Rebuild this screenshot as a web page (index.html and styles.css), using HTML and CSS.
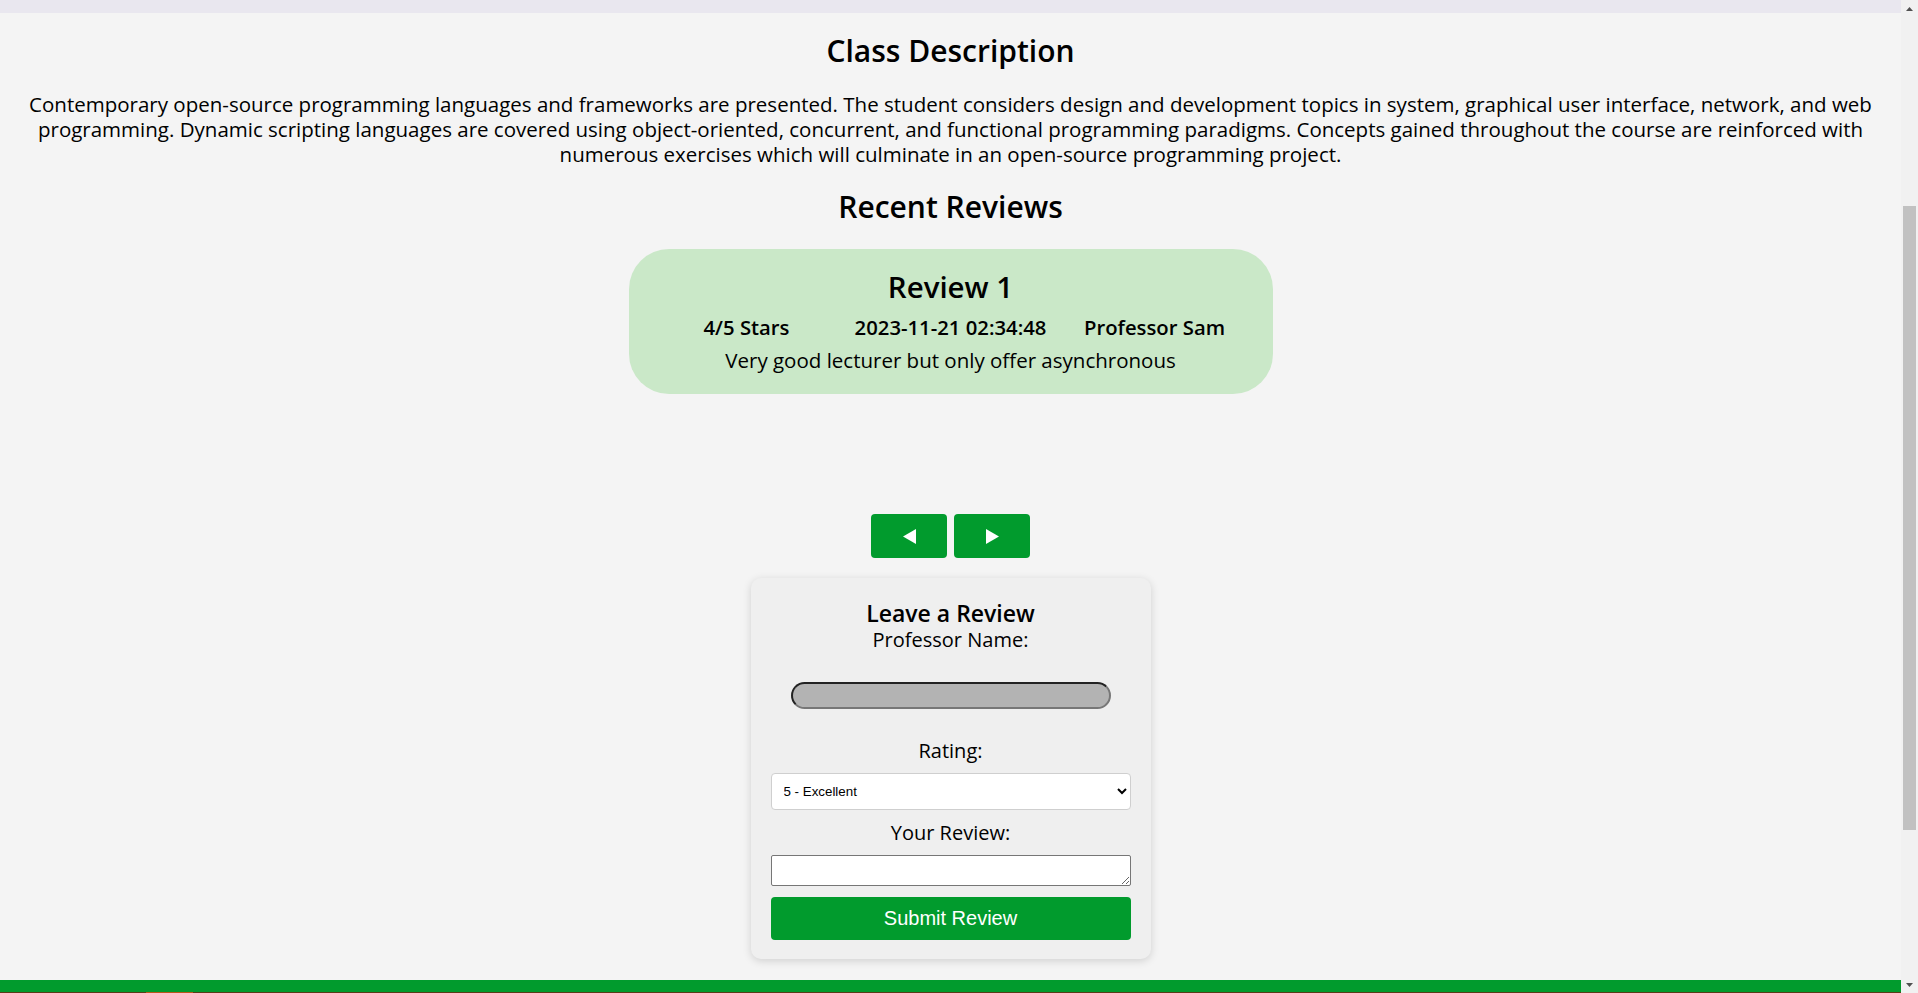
FILE: index.html
```html
<!DOCTYPE html>
<html lang="en">
<head>
<meta charset="utf-8">
<title>Class Reviews</title>
<link rel="stylesheet" href="styles.css">
</head>
<body>
<header class="site-header"></header>
<main class="content">
  <h2 class="section-title">Class Description</h2>
  <p class="description">Contemporary open-source programming languages and frameworks are presented. The student considers design and development topics in system, graphical user interface, network, and web programming. Dynamic scripting languages are covered using object-oriented, concurrent, and functional programming paradigms. Concepts gained throughout the course are reinforced with numerous exercises which will culminate in an open-source programming project.</p>
  <h2 class="section-title reviews-title">Recent Reviews</h2>
  <div class="carousel">
    <article class="review-card">
      <h3 class="review-title">Review 1</h3>
      <div class="review-meta">
        <span>4/5 Stars</span>
        <span>2023-11-21 02:34:48</span>
        <span>Professor Sam</span>
      </div>
      <p class="review-text">Very good lecturer but only offer asynchronous</p>
    </article>
  </div>
  <div class="carousel-controls">
    <button class="nav-btn" type="button" aria-label="Previous review">
      <svg width="13" height="15" viewBox="0 0 13 15"><polygon points="13,0 13,15 0,7.5" fill="#fff"/></svg>
    </button>
    <button class="nav-btn" type="button" aria-label="Next review">
      <svg width="13" height="15" viewBox="0 0 13 15"><polygon points="0,0 0,15 13,7.5" fill="#fff"/></svg>
    </button>
  </div>
  <form class="review-form">
    <h3 class="form-title">Leave a Review</h3>
    <label class="form-label" for="prof">Professor Name:</label>
    <input id="prof" class="prof-input" type="text">
    <label class="form-label label-gap" for="rating">Rating:</label>
    <select id="rating" class="rating-select">
      <option>5 - Excellent</option>
      <option>4 - Very Good</option>
      <option>3 - Good</option>
      <option>2 - Fair</option>
      <option>1 - Poor</option>
    </select>
    <label class="form-label label-small-gap" for="review">Your Review:</label>
    <textarea id="review" class="review-textarea"></textarea>
    <button class="submit-btn" type="submit">Submit Review</button>
  </form>
</main>
<footer class="site-footer">
  <div class="footer-strip"></div>
  <div class="footer-body"><span class="footer-mark"></span></div>
</footer>
<div class="fake-scrollbar" aria-hidden="true">
  <span class="sb-arrow">
    <svg width="7" height="4" viewBox="0 0 7 4"><polygon points="3.5,0 7,4 0,4" fill="#505050"/></svg>
  </span>
  <span class="sb-track"><span class="sb-thumb"></span></span>
  <span class="sb-arrow">
    <svg width="7" height="4" viewBox="0 0 7 4"><polygon points="0,0 7,0 3.5,4" fill="#505050"/></svg>
  </span>
</div>
<script src="script.js"></script>
</body>
</html>
```

FILE: styles.css
```css
html {
  background: #f4f4f4;
  scrollbar-width: none;
}

::-webkit-scrollbar {
  width: 0;
  height: 0;
}

body {
  margin: 0;
  padding-right: 17px;
  background: #f4f4f4;
  color: #000;
  font-family: "Open Sans", Lato, sans-serif;
}

.site-header {
  height: 313px;
  background: #e9e7ef;
}

.content {
  display: flex;
  flex-direction: column;
  align-items: center;
  padding: 0 0 21px;
}

.section-title {
  margin: 20px 0 0;
  font-size: 30px;
  line-height: 36px;
  font-weight: 600;
}

.description {
  margin: 23px 0 0;
  padding: 0 14px;
  font-size: 20.5px;
  line-height: 25px;
  text-align: center;
}

.reviews-title {
  margin-top: 22px;
}

.carousel {
  margin-top: 24px;
  min-height: 265px;
  display: flex;
  justify-content: center;
  align-items: flex-start;
}

.review-card {
  width: 644px;
  box-sizing: border-box;
  padding: 20px 16px 21px;
  background: #cae8c8;
  border-radius: 40px;
  text-align: center;
}

.review-title {
  margin: 0;
  font-size: 29.5px;
  line-height: 36px;
  font-weight: 600;
}

.review-meta {
  display: grid;
  grid-template-columns: repeat(3, 1fr);
  margin-top: 10px;
  font-size: 20.3px;
  line-height: 25px;
  font-weight: 600;
}

.review-text {
  margin: 8px 0 0;
  font-size: 20.5px;
  line-height: 25px;
}

.carousel-controls {
  display: flex;
  gap: 7px;
}

.nav-btn {
  width: 76px;
  height: 44px;
  display: flex;
  align-items: center;
  justify-content: center;
  padding: 0;
  border: none;
  border-radius: 4px;
  background: #019b2d;
  cursor: pointer;
}

.review-form {
  margin-top: 20px;
  width: 400px;
  box-sizing: border-box;
  padding: 22px 20px 19px;
  display: flex;
  flex-direction: column;
  align-items: center;
  background: #efefef;
  border-radius: 10px;
  box-shadow: 0 2px 8px rgba(0, 0, 0, 0.15);
  text-align: center;
}

.form-title {
  margin: 0;
  font-size: 23px;
  line-height: 27px;
  font-weight: 600;
}

.form-label {
  font-size: 20px;
  line-height: 25px;
}

.label-gap {
  margin-top: 29px;
}

.label-small-gap {
  margin-top: 10px;
}

.prof-input {
  margin-top: 30px;
  width: 320px;
  height: 27px;
  box-sizing: border-box;
  border: 2px solid;
  border-color: #222 #777 #777 #222;
  border-radius: 14px;
  background: #b3b3b3;
  padding: 0 10px;
}

.rating-select {
  margin-top: 10px;
  width: 360px;
  height: 37px;
  box-sizing: border-box;
  padding: 0 8px;
  border: 1px solid #cfcfcf;
  border-radius: 4px;
  background: #fff;
  font-family: "Liberation Sans", Arial, sans-serif;
  font-size: 13.33px;
  color: #000;
}

.review-textarea {
  margin-top: 10px;
  width: 360px;
  height: 31px;
  box-sizing: border-box;
  border: 1px solid #767676;
  border-radius: 2px;
  background: #fff;
  resize: vertical;
}

.submit-btn {
  margin-top: 11px;
  width: 360px;
  height: 43px;
  border: none;
  border-radius: 4px;
  background: #019b2d;
  color: #fff;
  font-family: "Liberation Sans", Arial, sans-serif;
  font-size: 20px;
  cursor: pointer;
}

.site-footer {
  display: flex;
  flex-direction: column;
}

.footer-strip {
  height: 12px;
  background: #019b2d;
}

.footer-body {
  height: 235px;
  background: #5b3d18;
  padding-left: 146px;
}

.footer-mark {
  display: block;
  width: 47px;
  height: 40px;
  background: #b9571b;
}

.fake-scrollbar {
  position: fixed;
  top: 0;
  right: 0;
  width: 17px;
  height: 100vh;
  display: flex;
  flex-direction: column;
  background: #f1f1f1;
}

.sb-arrow {
  height: 17px;
  display: flex;
  align-items: center;
  justify-content: center;
}

.sb-track {
  flex: 1;
  display: flex;
  flex-direction: column;
  padding: 189px 2px 0;
}

.sb-thumb {
  height: 624px;
  background: #c1c1c1;
}
```

FILE: script.js
```js
if ('scrollRestoration' in history) {
  history.scrollRestoration = 'manual';
}
window.scrollTo(0, 300);
window.addEventListener('load', function () {
  window.scrollTo(0, 300);
});
```
